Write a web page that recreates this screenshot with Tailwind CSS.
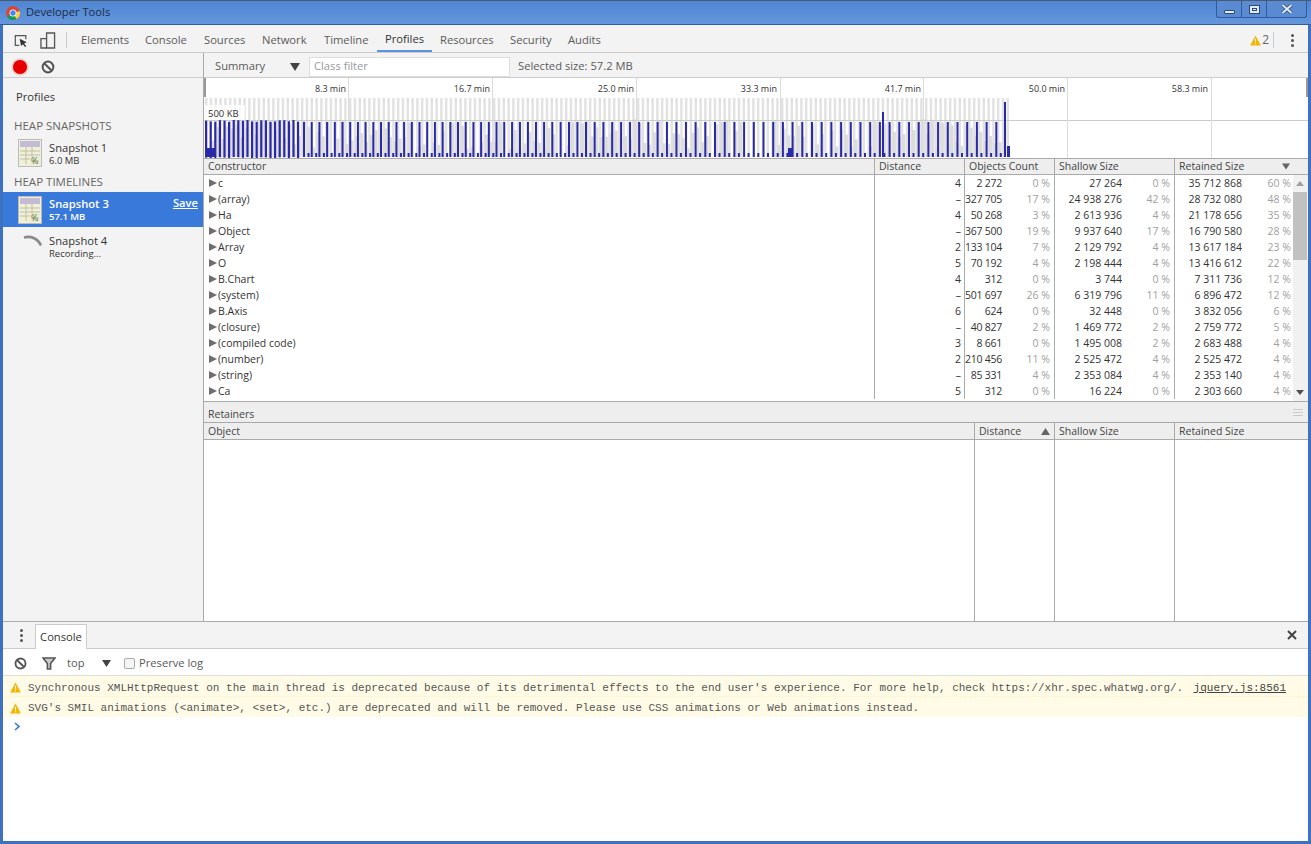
<!DOCTYPE html>
<html lang="en">
<head>
    <meta charset="UTF-8">
    <title>Developer Tools</title>
    <script src="https://cdn.jsdelivr.net/npm/@tailwindcss/browser@4"></script>
</head>
<body class="h-screen overflow-hidden bg-white font-['Open_Sans',sans-serif] text-[10.5px] text-[#333]">
<div class="flex h-[844px] w-[1311px] flex-col border-b-[3px] border-l-[3px] border-r-[3px] border-[#3e72c0] bg-white">

    <!-- title bar -->
    <div class="relative -mx-[3px] flex h-[25px] shrink-0 items-center border-b border-t border-b-[#2f5c9c] border-t-[#4a5a70] bg-gradient-to-b from-[#4f85d3] to-[#6496dc] pl-[6px]">
        <svg class="h-[14px] w-[14px]" viewBox="0 0 24 24">
            <circle cx="12" cy="12" r="12" fill="#db4437"/>
            <path d="M12 12 L1.6 18 A12 12 0 0 0 18 22.4 Z" fill="#0f9d58"/>
            <path d="M12 12 L23.5 8.5 A12 12 0 0 1 12 24 L18 22.4 Z" fill="#ffcd40"/>
            <circle cx="12" cy="12" r="6" fill="#fff"/>
            <circle cx="12" cy="12" r="4.6" fill="#4285f4"/>
        </svg>
        <span class="ml-[6px] text-[11.2px] text-[#1c2c44]">Developer Tools</span>
        <div class="absolute right-[4px] top-0 flex h-[17px] w-[91px] rounded-b-[3px] border-x border-b border-[#2f5c9c] bg-[#5a8bd2]">
            <div class="flex w-[25px] items-end justify-center border-r border-[#2f5c9c] pb-[3px]"><div class="h-[4px] w-[11px] rounded-[1px] border border-[#2c4a78] bg-[#dfe9f7]"></div></div>
            <div class="flex w-[25px] items-center justify-center border-r border-[#2f5c9c]"><div class="flex h-[9px] w-[11px] items-center justify-center border border-[#2c4a78] bg-[#dfe9f7]"><div class="h-[3px] w-[5px] border border-[#2c4a78]"></div></div></div>
            <div class="flex flex-1 items-center justify-center">
                <svg class="h-[10px] w-[12px]" viewBox="0 0 12 10"><path d="M1.5 1 L10.5 9 M10.5 1 L1.5 9" stroke="#2c4a78" stroke-width="3.4"/><path d="M1.5 1 L10.5 9 M10.5 1 L1.5 9" stroke="#e6eef9" stroke-width="1.8"/></svg>
            </div>
        </div>
    </div>

    <!-- main tabs -->
    <div class="flex h-[28px] shrink-0 items-center border-b border-[#ccc] bg-[#f3f3f3] pt-[3px] text-[11.2px] text-[#5a5a5a]">
        <svg class="ml-[11px] h-[15px] w-[14px]" viewBox="0 0 16 16" fill="none"><path d="M6 13.5 H1.5 V2.5 H13.5 V6.5" stroke="#555" stroke-width="1.4"/><path d="M6.5 6 L14.5 10 L11.5 11.3 L14 14.5 L12.6 15.5 L10.2 12.2 L8 14.2 Z" fill="#333"/></svg>
        <svg class="ml-[12px] h-[17px] w-[16px]" viewBox="0 0 17 18" fill="none"><path d="M7 1 H15.5 V17 H1 V7 H7 Z M7 7 V17" stroke="#555" stroke-width="1.4"/></svg>
        <div class="ml-[10px] mr-[6px] h-[16px] border-l border-[#ccc]"></div>
        <div class="w-[72px] pl-[8px]">Elements</div>
        <div class="w-[59px]">Console</div>
        <div class="w-[58px]">Sources</div>
        <div class="w-[62px]">Network</div>
        <div class="w-[53px]">Timeline</div>
        <div class="mr-[8px] flex h-full w-[55px] items-center border-b-2 border-[#5a93e0] pl-[8px] text-[#333]">Profiles</div>
        <div class="w-[70px]">Resources</div>
        <div class="w-[58px]">Security</div>
        <div class="w-[60px]">Audits</div>
        <div class="ml-auto flex items-center pr-[14px]">
            <svg class="h-[11px] w-[11px]" viewBox="0 0 12 12"><path d="M6 .5 L11.8 11.5 H.2 Z" fill="#f4b400"/><path d="M5.4 4 H6.6 V8 H5.4 Z M5.4 9 H6.6 V10.2 H5.4 Z" fill="#fff"/></svg>
            <span class="ml-[1px] text-[12px] text-[#666]">2</span>
            <div class="ml-[4px] h-[16px] border-l border-[#ccc]"></div>
            <div class="ml-[17px] flex flex-col gap-[2px]"><i class="block h-[3px] w-[3px] rounded-full bg-[#555]"></i><i class="block h-[3px] w-[3px] rounded-full bg-[#555]"></i><i class="block h-[3px] w-[3px] rounded-full bg-[#555]"></i></div>
        </div>
    </div>

    <!-- profiles panel -->
    <div class="flex h-[569px] shrink-0 border-b border-[#aaa]">
        <!-- sidebar -->
        <div class="flex w-[201px] shrink-0 flex-col border-r border-[#aaa] bg-[#f3f3f3]">
            <div class="flex h-[25px] shrink-0 items-center border-b border-[#ccc] pl-[10px] pt-[3px]">
                <div class="h-[14px] w-[14px] rounded-full bg-[#e60000] shadow-[0_0_3px_#e06060]"></div>
                <svg class="ml-[14px] h-[14px] w-[14px]" viewBox="0 0 14 14" fill="none"><circle cx="7" cy="7" r="5.4" stroke="#555" stroke-width="2"/><path d="M3.2 3.2 L10.8 10.8" stroke="#555" stroke-width="2"/></svg>
            </div>
            <div class="pl-[13px] pt-[11px] text-[11.2px] leading-[16px]">Profiles</div>
            <div class="pl-[11px] pt-[13px] text-[11.5px] leading-[16px] text-[#666]">HEAP SNAPSHOTS</div>
            <div class="mt-[2px] flex h-[32px] items-center pl-[15px] pt-[1px]">
                <svg class="h-[28px] w-[24px] shrink-0" viewBox="0 0 24 28"><rect x=".5" y=".5" width="23" height="27" fill="#f0efd8" stroke="#bbb"/><rect x="2" y="2" width="20" height="6" fill="#c4bcd4"/><path d="M2 12 H22 M2 16 H22 M2 20 H22 M8 8 V25 M14 8 V25" stroke="#c0c0a8"/><rect x="12" y="17" width="10" height="9" fill="#ecebd2"/><text x="13" y="25" font-size="9" fill="#4a6b3a">%</text></svg>
                <div class="ml-[7px] mt-[2px]">
                    <div class="text-[11.2px] leading-[14px] text-[#333]">Snapshot 1</div>
                    <div class="text-[9.5px] leading-[11px] text-[#333]">6.0 MB</div>
                </div>
            </div>
            <div class="pl-[11px] pt-[6px] text-[11.5px] leading-[16px] text-[#666]">HEAP TIMELINES</div>
            <div class="mt-[2px] flex h-[35px] items-center bg-[#3879d9] pl-[15px] text-white">
                <svg class="h-[28px] w-[24px] shrink-0" viewBox="0 0 24 28"><rect x=".5" y=".5" width="23" height="27" fill="#f0efd8" stroke="#bbb"/><rect x="2" y="2" width="20" height="6" fill="#c4bcd4"/><path d="M2 12 H22 M2 16 H22 M2 20 H22 M8 8 V25 M14 8 V25" stroke="#c0c0a8"/><rect x="12" y="17" width="10" height="9" fill="#ecebd2"/><text x="13" y="25" font-size="9" fill="#4a6b3a">%</text></svg>
                <div class="ml-[7px]">
                    <div class="text-[11.2px] font-semibold leading-[14px]">Snapshot 3</div>
                    <div class="text-[9.5px] font-semibold leading-[11px]">57.1 MB</div>
                </div>
                <div class="-mt-[12px] ml-auto pr-[5px] text-[11.2px] font-semibold underline">Save</div>
            </div>
            <div class="flex h-[36px] items-center pl-[15px] pt-[1px]">
                <svg class="h-[28px] w-[24px] shrink-0" viewBox="0 0 24 28" fill="none"><path d="M6 5.5 A14 14 0 0 1 23 13.5" stroke="#8a8a8a" stroke-width="2.6"/></svg>
                <div class="ml-[7px] mt-[2px]">
                    <div class="text-[11.2px] leading-[14px]">Snapshot 4</div>
                    <div class="text-[9.5px] leading-[11px]">Recording...</div>
                </div>
            </div>
        </div>

        <!-- content -->
        <div class="flex min-w-0 flex-1 flex-col">
            <div class="flex h-[25px] shrink-0 items-center border-b border-[#ccc] bg-[#f3f3f3] pl-[11px] pt-[3px] text-[11.2px] text-[#5a5a5a]">
                <div class="w-[75px]">Summary</div>
                <svg class="h-[8px] w-[10px]" viewBox="0 0 10 8"><path d="M0 0 H10 L5 8 Z" fill="#444"/></svg>
                <div class="ml-[9px] flex h-[20px] w-[201px] items-center border border-[#ddd] bg-white pl-[4px] text-[#999]">Class filter</div>
                <div class="ml-[8px]">Selected size: 57.2 MB</div>
            </div>

            <svg id="overview" class="h-[80px] w-full shrink-0 bg-white" viewBox="204 78 1104 80"></svg>

            <!-- constructor table -->
            <div class="grid h-[17px] shrink-0 grid-cols-[670px_90px_90px_120px_1fr] border-y border-[#aaa] bg-[#eee] leading-[15px] text-[#444]">
                <div class="pl-[4px]">Constructor</div>
                <div class="border-l border-[#aaa] pl-[4px]">Distance</div>
                <div class="border-l border-[#aaa] pl-[4px]">Objects Count</div>
                <div class="border-l border-[#aaa] pl-[4px]">Shallow Size</div>
                <div class="flex items-center justify-between border-l border-[#aaa] pl-[4px] pr-[18px]">Retained Size
                    <svg class="h-[7px] w-[8px]" viewBox="0 0 9 7"><path d="M0 0 H9 L4.5 7 Z" fill="#666"/></svg>
                </div>
            </div>
            <div class="flex h-[227px] shrink-0 border-b border-[#aaa]">
                <div id="rows" class="w-[1089px]"></div>
                <!-- scrollbar -->
                <div class="relative w-[15px] bg-[#f1f1f1]">
                    <svg class="absolute left-[3px] top-[6px] h-[5px] w-[8px]" viewBox="0 0 8 5"><path d="M0 5 H8 L4 0 Z" fill="#a0a0a0"/></svg>
                    <div class="absolute left-0 top-[17px] h-[68px] w-[14px] bg-[#c1c1c1]"></div>
                    <svg class="absolute bottom-[6px] left-[3px] h-[5px] w-[8px]" viewBox="0 0 8 5"><path d="M0 0 H8 L4 5 Z" fill="#505050"/></svg>
                </div>
            </div>

            <!-- retainers -->
            <div class="flex h-[21px] shrink-0 items-end justify-between border-b border-[#aaa] bg-[#eee] pl-[4px] pr-[5px] leading-[16px] text-[#444]">
                <span>Retainers</span>
                <div class="flex w-[10px] flex-col gap-[2px] self-center"><i class="block h-px bg-[#ccc]"></i><i class="block h-px bg-[#ccc]"></i><i class="block h-px bg-[#ccc]"></i></div>
            </div>
            <div class="grid h-[17px] shrink-0 grid-cols-[770px_80px_120px_1fr] border-b border-[#aaa] bg-[#eee] leading-[16px] text-[#444]">
                <div class="pl-[4px]">Object</div>
                <div class="flex items-center justify-between border-l border-[#aaa] pl-[4px] pr-[4px]">Distance
                    <svg class="h-[7px] w-[9px]" viewBox="0 0 9 7"><path d="M0 7 H9 L4.5 0 Z" fill="#666"/></svg>
                </div>
                <div class="border-l border-[#aaa] pl-[4px]">Shallow Size</div>
                <div class="border-l border-[#aaa] pl-[4px]">Retained Size</div>
            </div>
            <div class="grid min-h-0 flex-1 grid-cols-[770px_80px_120px_1fr]">
                <div></div>
                <div class="border-l border-[#aaa]"></div>
                <div class="border-l border-[#aaa]"></div>
                <div class="border-l border-[#aaa]"></div>
            </div>
        </div>
    </div>

    <!-- console drawer -->
    <div class="flex h-[27px] shrink-0 items-end border-b border-[#ccc] bg-[#f3f3f3]">
        <div class="mb-[6px] ml-[17px] flex flex-col gap-[2px]"><i class="block h-[3px] w-[3px] rounded-full bg-[#555]"></i><i class="block h-[3px] w-[3px] rounded-full bg-[#555]"></i><i class="block h-[3px] w-[3px] rounded-full bg-[#555]"></i></div>
        <div class="-mb-px ml-[12px] flex h-[25px] w-[52px] items-center justify-center border-x border-t border-[#ccc] bg-white text-[11.2px]">Console</div>
        <svg class="mb-[8px] ml-auto mr-[11px] h-[10px] w-[10px]" viewBox="0 0 10 10"><path d="M1 1 L9 9 M9 1 L1 9" stroke="#444" stroke-width="2"/></svg>
    </div>
    <div class="flex h-[27px] shrink-0 items-center border-b border-[#ddd] pl-[11px] pt-[2px] text-[11.2px] text-[#5a5a5a]">
        <svg class="h-[13px] w-[13px]" viewBox="0 0 14 14" fill="none"><circle cx="7" cy="7" r="5.4" stroke="#555" stroke-width="2"/><path d="M3.2 3.2 L10.8 10.8" stroke="#555" stroke-width="2"/></svg>
        <svg class="ml-[15px] h-[13px] w-[14px]" viewBox="0 0 14 13" fill="none"><path d="M1 1 H13 L8.6 6.5 V12 H5.4 V6.5 Z" stroke="#555" stroke-width="1.6" fill="#ccc"/></svg>
        <span class="ml-[11px] w-[35px]">top</span>
        <svg class="h-[7px] w-[9px]" viewBox="0 0 9 7"><path d="M0 0 H9 L4.5 7 Z" fill="#444"/></svg>
        <div class="ml-[13px] h-[11px] w-[11px] rounded-[2px] border border-[#aaa] bg-[#f5f5f5]"></div>
        <span class="ml-[4px]">Preserve log</span>
    </div>
    <div class="shrink-0 bg-[#fffbe6] font-['Liberation_Mono',monospace] text-[11px] leading-[16px] text-[#555]">
        <div class="flex h-[21px] items-center border-b border-[#fff5d0] pl-[7px] pt-[3px]">
            <svg class="h-[11px] w-[11px] shrink-0" viewBox="0 0 12 12"><path d="M6 .5 L11.8 11.5 H.2 Z" fill="#f4b400"/><path d="M5.4 4 H6.6 V8 H5.4 Z M5.4 9 H6.6 V10.2 H5.4 Z" fill="#fff"/></svg>
            <span class="ml-[7px]">Synchronous XMLHttpRequest on the main thread is deprecated because of its detrimental effects to the end user's experience. For more help, check https://xhr.spec.whatwg.org/.</span>
            <span class="ml-auto pr-[22px] text-[#444] underline">jquery.js:8561</span>
        </div>
        <div class="flex h-[20px] items-center pl-[7px] pt-[2px]">
            <svg class="h-[11px] w-[11px] shrink-0" viewBox="0 0 12 12"><path d="M6 .5 L11.8 11.5 H.2 Z" fill="#f4b400"/><path d="M5.4 4 H6.6 V8 H5.4 Z M5.4 9 H6.6 V10.2 H5.4 Z" fill="#fff"/></svg>
            <span class="ml-[7px]">SVG's SMIL animations (&lt;animate&gt;, &lt;set&gt;, etc.) are deprecated and will be removed. Please use CSS animations or Web animations instead.</span>
        </div>
    </div>
    <div class="min-h-0 flex-1 pl-[11px] pt-[5px]">
        <svg class="h-[9px] w-[6px]" viewBox="0 0 6 9" fill="none"><path d="M1 1 L5 4.5 L1 8" stroke="#3b78d8" stroke-width="1.6"/></svg>
    </div>
</div>

<script>
    // constructor table rows
    var rows = [
        ['c', '4', '2 272', '0 %', '27 264', '0 %', '35 712 868', '60 %'],
        ['(array)', '–', '327 705', '17 %', '24 938 276', '42 %', '28 732 080', '48 %'],
        ['Ha', '4', '50 268', '3 %', '2 613 936', '4 %', '21 178 656', '35 %'],
        ['Object', '–', '367 500', '19 %', '9 937 640', '17 %', '16 790 580', '28 %'],
        ['Array', '2', '133 104', '7 %', '2 129 792', '4 %', '13 617 184', '23 %'],
        ['O', '5', '70 192', '4 %', '2 198 444', '4 %', '13 416 612', '22 %'],
        ['B.Chart', '4', '312', '0 %', '3 744', '0 %', '7 311 736', '12 %'],
        ['(system)', '–', '501 697', '26 %', '6 319 796', '11 %', '6 896 472', '12 %'],
        ['B.Axis', '6', '624', '0 %', '32 448', '0 %', '3 832 056', '6 %'],
        ['(closure)', '–', '40 827', '2 %', '1 469 772', '2 %', '2 759 772', '5 %'],
        ['(compiled code)', '3', '8 661', '0 %', '1 495 008', '2 %', '2 683 488', '4 %'],
        ['(number)', '2', '210 456', '11 %', '2 525 472', '4 %', '2 525 472', '4 %'],
        ['(string)', '–', '85 331', '4 %', '2 353 084', '4 %', '2 353 140', '4 %'],
        ['Ca', '5', '312', '0 %', '16 224', '0 %', '2 303 660', '4 %']
    ];
    document.getElementById('rows').innerHTML = rows.map(function(r) {
        return `<div class="grid h-[16px] grid-cols-[670px_90px_90px_120px_119px] leading-[16px] text-[#333]">
            <div class="flex items-center pl-[5px]"><svg class="mr-[1px] h-[8px] w-[8px]" viewBox="0 0 8 8"><path d="M0 0 L8 4 L0 8 Z" fill="#6e6e6e"/></svg><span>${r[0]}</span></div>
            <div class="border-l border-[#aaa] pr-[3px] text-right">${r[1]}</div>
            <div class="flex border-l border-[#aaa]"><span class="w-[37px] shrink-0 whitespace-nowrap text-right tracking-[-0.25px]">${r[2]}</span><span class="flex-1 pr-[4px] text-right text-[#a0a0a0]">${r[3]}</span></div>
            <div class="flex border-l border-[#aaa]"><span class="w-[67px] shrink-0 text-right">${r[4]}</span><span class="flex-1 pr-[4px] text-right text-[#a0a0a0]">${r[5]}</span></div>
            <div class="flex border-l border-[#aaa]"><span class="w-[67px] shrink-0 text-right">${r[6]}</span><span class="flex-1 pr-[2px] text-right text-[#a0a0a0]">${r[7]}</span></div>
        </div>`;
    }).join('');

    // heap timeline overview
    var seed = 7;
    function rnd() {
        seed = (seed * 16807) % 2147483647;
        return seed / 2147483647;
    }
    function rect(x, y, w, h, fill) {
        return `<rect x="${x}" y="${y}" width="${w}" height="${h}" fill="${fill}"/>`;
    }
    var svg = '';
    var x;
    for (x = 205; x < 1009; x += 4.8) {
        svg += rect(x, 98, 2.4, 59, '#e2e2e2');
        if (x < 1003 && rnd() > 0.15) {
            var gh = 8 + rnd() * 30;
            svg += rect(x + 1, 157 - gh, 3.5, gh, '#dcdcdc');
        }
    }
    svg += rect(204, 120, 1104, 1, '#ccc');
    [348, 492, 636, 780, 923, 1067, 1211].forEach(function(gx) {
        svg += rect(gx, 78, 1, 80, '#ddd');
    });
    svg += rect(204, 78, 2, 19, '#999') + rect(1306, 78, 2, 19, '#999');
    svg += rect(205, 105, 40, 15, 'rgba(255,255,255,0.8)');

    // dense bars at the start
    for (x = 205; x < 298; x += 4.6) {
        svg += rect(x, 120 + rnd() * 2, 2.2, 37, '#2a2aa8');
    }
    svg += rect(205, 148, 10, 9, '#2a2aa8');
    // spacing grows toward the last sample, so walk back from it
    for (x = 995.3; x > 300; x -= x > 700 ? 9.7 : (x < 500 ? 7.7 : 7.7 + (x - 500) / 100)) {
        svg += rect(x, 122, 2, 35, '#2a2aa8');
        svg += rect(x + 4.5, 153, 2, 4, '#2a2aa8');
    }
    svg += rect(882, 112, 2, 45, '#2a2aa8');
    svg += rect(1004, 102, 2, 55, '#2a2aa8');
    svg += rect(1007, 146, 3, 11, '#2a2aa8');
    svg += rect(788, 148, 5, 9, '#2a2aa8');

    [['8.3 min', 346], ['16.7 min', 490], ['25.0 min', 634], ['33.3 min', 777], ['41.7 min', 921], ['50.0 min', 1065], ['58.3 min', 1208]].forEach(function(t) {
        svg += `<text x="${t[1]}" y="92" text-anchor="end" font-size="9" fill="#333">${t[0]}</text>`;
    });
    svg += '<text x="208" y="117" font-size="9.5" fill="#333">500 KB</text>';
    document.getElementById('overview').innerHTML = svg;
</script>
</body>
</html>
